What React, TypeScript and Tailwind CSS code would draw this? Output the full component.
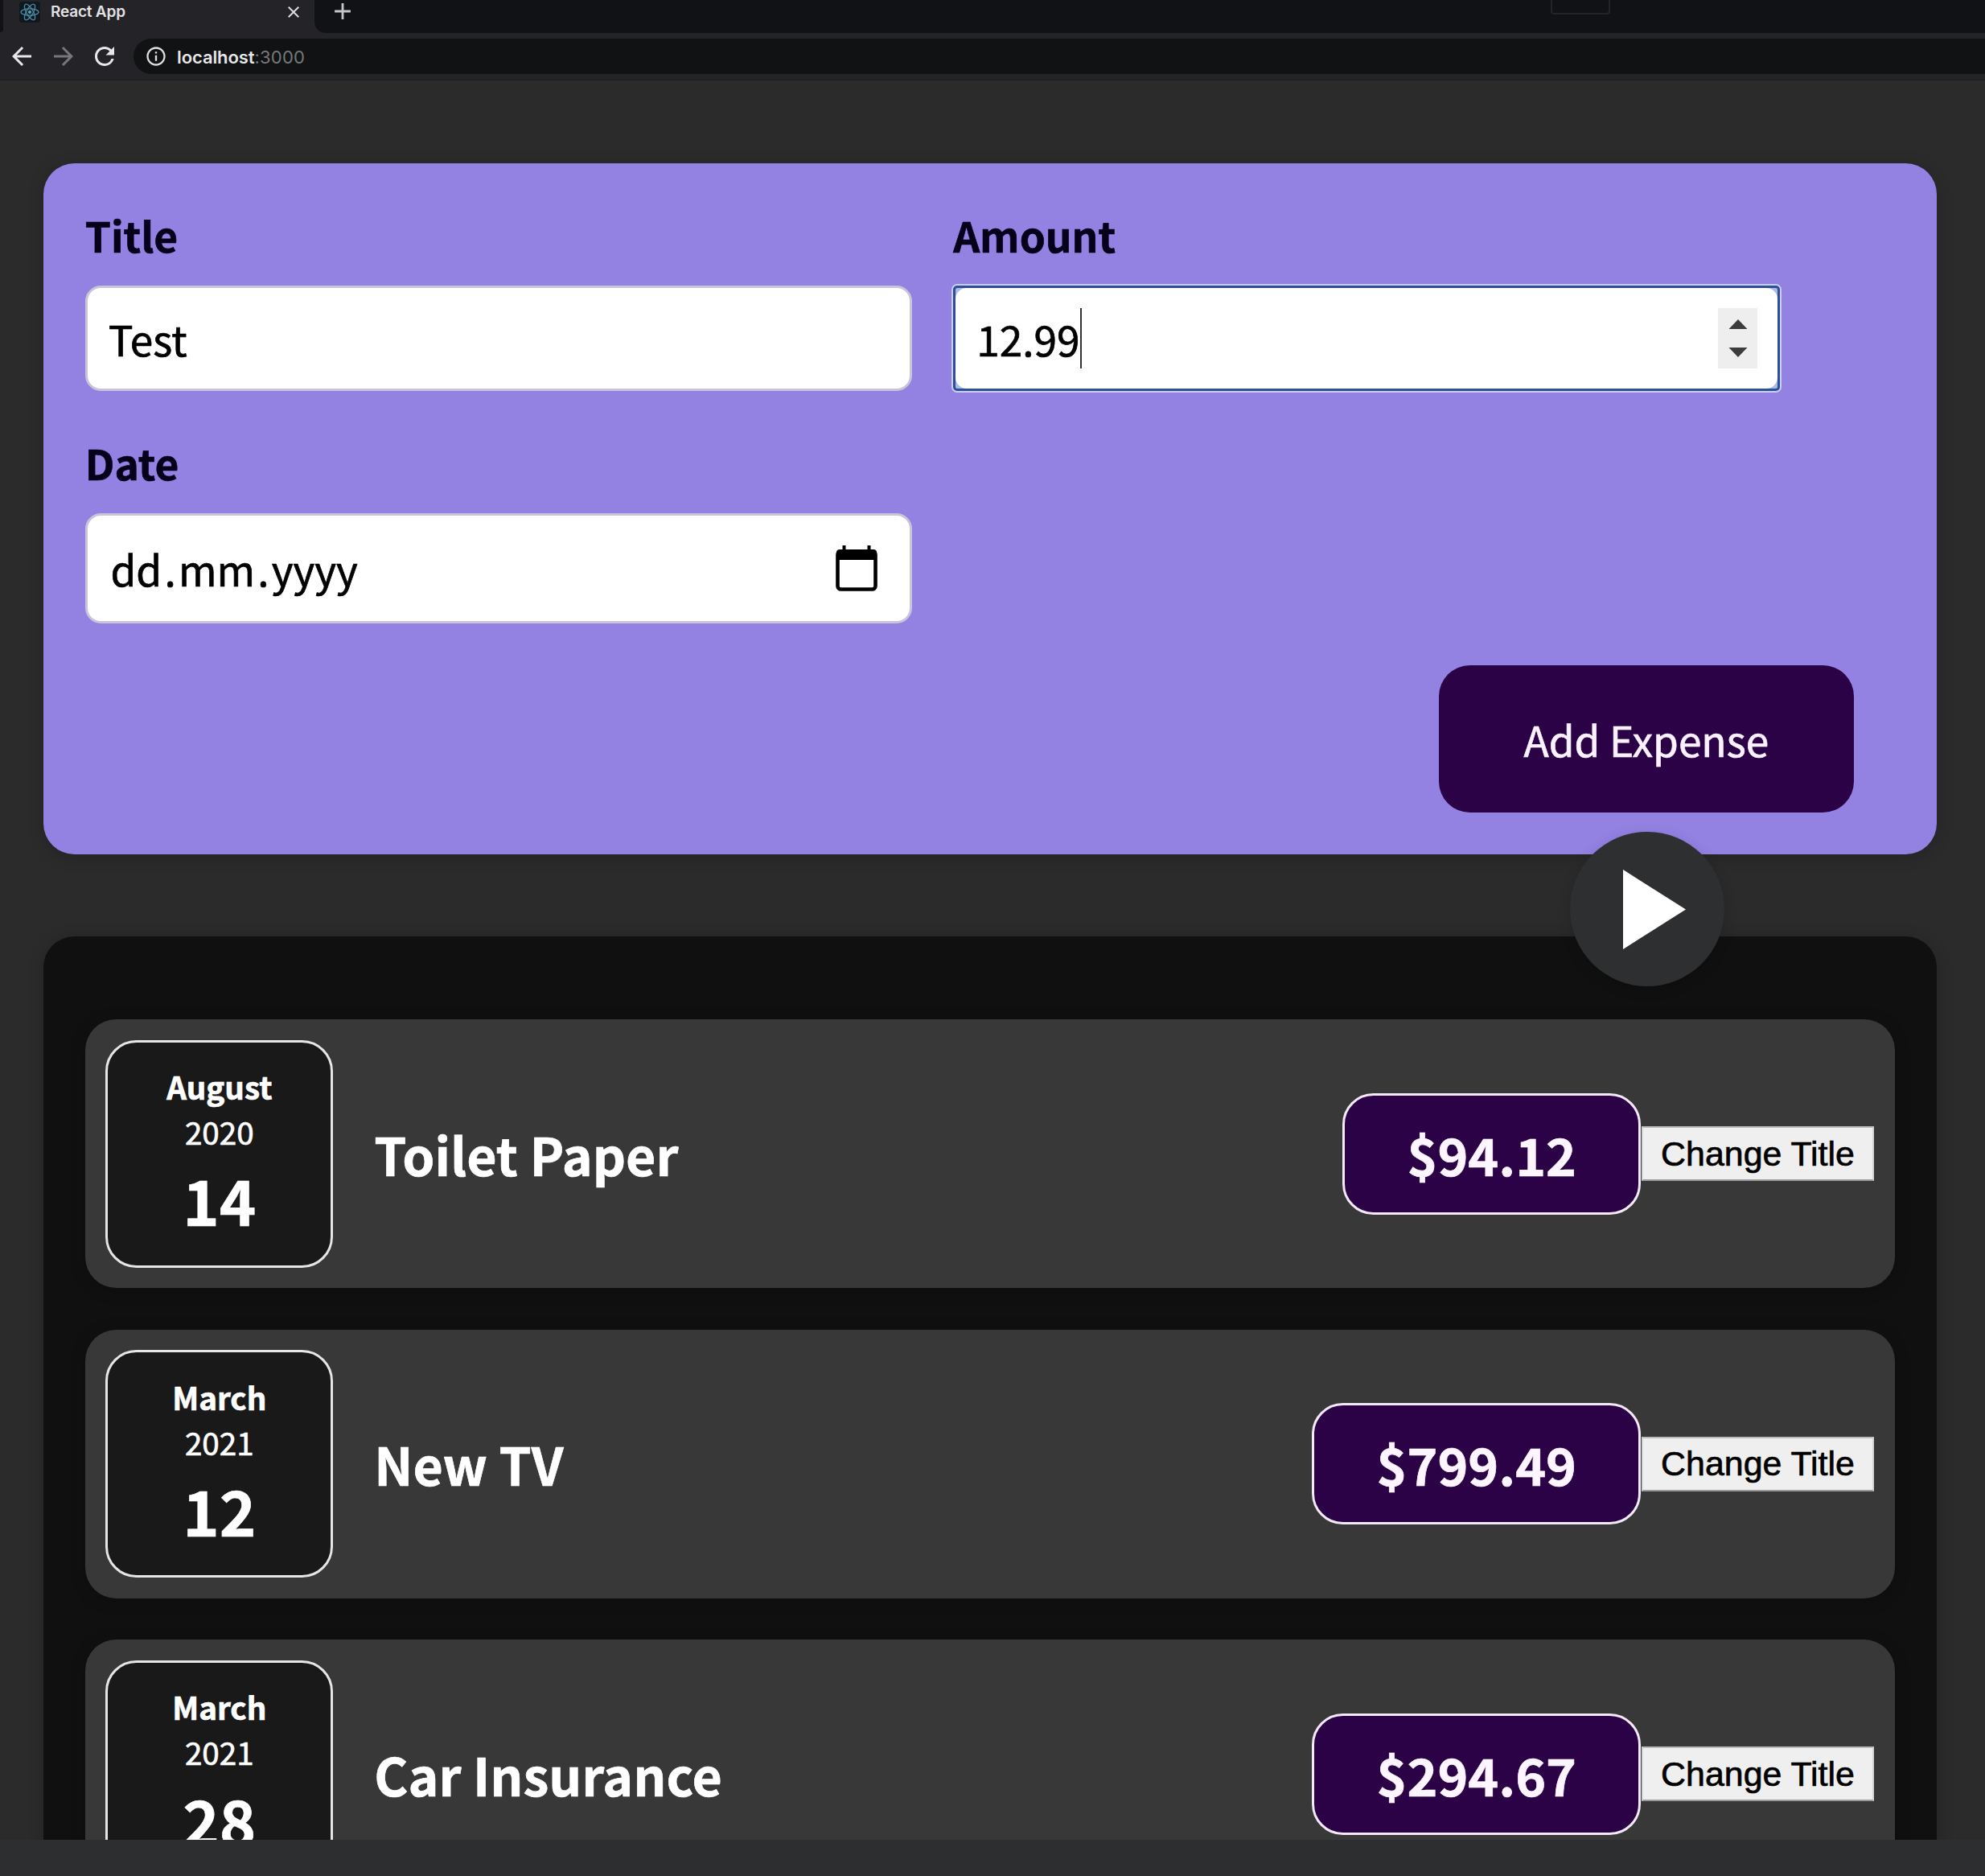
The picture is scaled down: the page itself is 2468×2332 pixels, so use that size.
import React from "react";
import { MdAdd, MdArrowBack, MdArrowForward, MdClose, MdInfoOutline, MdRefresh } from "react-icons/md";

type Expense = {
  month: string;
  year: string;
  day: string;
  title: string;
  amount: string;
};

const expenses: Expense[] = [
  { month: "August", year: "2020", day: "14", title: "Toilet Paper", amount: "$94.12" },
  { month: "March", year: "2021", day: "12", title: "New TV", amount: "$799.49" },
  { month: "March", year: "2021", day: "28", title: "Car Insurance", amount: "$294.67" },
];

function ReactLogo() {
  return (
    <span className="flex h-[26px] w-[26px] items-center justify-center rounded-[4px] bg-[#10181e]">
      <svg viewBox="-12 -12 24 24" className="h-6 w-6" fill="none" stroke="#4a8ba6" strokeWidth="1.3">
        <ellipse rx="11" ry="4.2" />
        <ellipse rx="11" ry="4.2" transform="rotate(60)" />
        <ellipse rx="11" ry="4.2" transform="rotate(120)" />
        <circle r="2" fill="#5aa5c2" stroke="none" />
      </svg>
    </span>
  );
}

function BrowserChrome() {
  return (
    <header className="h-[100px] border-b border-[#1b1b1c] bg-[#242328] font-['Inter',sans-serif]">
      <div className="flex h-[41px]">
        <div className="h-[40px] w-[4px] rounded-br-[4px] bg-[#111214]" />
        <div className="flex h-[29px] w-[387px] items-center pr-[14px] pl-5">
          <ReactLogo />
          <span className="mt-px ml-[13px] text-[19px] font-semibold tracking-[-0.2px] text-[#e2e2e4]">React App</span>
          <MdClose className="ml-auto h-6 w-6 text-[#dcdcde]" />
        </div>
        <div className="flex flex-1 justify-between rounded-bl-[14px] bg-[#111215]">
          <MdAdd className="mt-[-3px] ml-[18px] h-[34px] w-[34px] text-[#c6c6c8]" />
          <div className="mr-[466px] h-[18px] w-[74px] rounded-b-[4px] border-2 border-t-0 border-[#232426]" />
        </div>
      </div>
      <div className="flex h-[58px] items-center pl-[9px]">
        <MdArrowBack className="h-9 w-9 text-[#e8e8ea]" />
        <MdArrowForward className="ml-4 h-9 w-9 text-[#77767b]" />
        <MdRefresh className="ml-[15px] h-9 w-9 text-[#e8e8ea]" />
        <div className="ml-[18px] flex h-[44px] flex-1 items-center rounded-l-full bg-[#111214] pl-[14px]">
          <MdInfoOutline className="h-7 w-7 text-[#dedee0]" />
          <span className="mt-[2px] ml-[12px] text-[22px] text-[#77787b]">
            <span className="font-semibold tracking-[-0.1px] text-[#e6e6e8]">localhost</span>
            <span className="tracking-[0.25px]">:3000</span>
          </span>
        </div>
      </div>
    </header>
  );
}

function Field({ label, children }: { label: string; children: React.ReactNode }) {
  return (
    <div className="w-[1028px]">
      <div className="mb-[25.2px] pt-[0.5px] text-[51.4px] leading-[74.5px] font-bold text-[#06001a]">{label}</div>
      {children}
    </div>
  );
}

function CalendarIcon() {
  return (
    <svg viewBox="0 0 52 58" className="h-[58px] w-[52px]" fill="none">
      <rect x="2.5" y="7.5" width="47" height="47" rx="4" stroke="#000" strokeWidth="4.6" />
      <path d="M1 9a4 4 0 0 1 4-4h42a4 4 0 0 1 4 4v9H1z" fill="#000" />
      <path d="M10.5 0v8M41.5 0v8" stroke="#000" strokeWidth="4" />
    </svg>
  );
}

function ExpenseForm() {
  return (
    <section className="mx-[0.4px] rounded-[38.6px] bg-[#9482e3] px-[51.4px] py-[51.4px] shadow-[0_3px_20px_rgba(0,0,0,0.2)]">
      <div className="flex flex-wrap gap-x-[51.4px] gap-y-[51.4px]">
        <Field label="Title">
          <div className="h-[131.6px] rounded-[19.3px] border-[3px] border-[#c9c4d8] bg-white px-[26px] pt-[26.7px] text-[51.4px] leading-[74.5px] text-black">
            Test
          </div>
        </Field>
        <Field label="Amount">
          <div className="h-[131.6px] rounded-[5px] border-[3px] border-[#2f4f94] bg-[#a9bbe8] shadow-[0_0_0_2px_#c8cff0]">
            <div className="flex h-full items-center justify-between rounded-[14px] bg-white pr-[25px] pl-[26px]">
              <div className="flex items-center">
                <span className="pt-[2px] text-[51.4px] leading-[74.5px] text-black">12.99</span>
                <span className="h-[75px] w-[2px] bg-[#333]" />
              </div>
              <div className="flex h-[75px] w-[49px] flex-col items-center justify-center bg-[#eeeeee]">
                <svg viewBox="0 0 24 48" className="h-12 w-6" fill="#3c3c3c">
                  <path d="M12 1 23.5 13H.5zM12 48 23.5 36H.5z" />
                </svg>
              </div>
            </div>
          </div>
        </Field>
        <Field label="Date">
          <div className="flex h-[137.6px] items-center justify-between rounded-[19.3px] border-[3px] border-[#c9c4d8] bg-white pr-[40px] pl-[25.5px] text-[51.4px] leading-[74.5px] text-black">
            <div className="flex pt-[2px]">
              <span className="px-[3.2px]">dd</span>.<span className="px-[3.2px]">mm</span>.
              <span className="px-[3.2px]">yyyy</span>
            </div>
            <CalendarIcon />
          </div>
        </Field>
      </div>
      <div className="mt-[51.4px] mr-[51.4px] flex justify-end">
        <button className="h-[183.4px] w-[516px] rounded-[38.6px] bg-[#2a0245] pt-[2px] text-[51.4px] leading-[74.5px] text-[#fbf2ff]">
          Add Expense
        </button>
      </div>
    </section>
  );
}

function ExpenseDate({ month, year, day }: Pick<Expense, "month" | "year" | "day">) {
  return (
    <div className="flex h-[283px] w-[283px] shrink-0 flex-col items-center justify-center rounded-[38.6px] border-[3px] border-[#e6e6e6] bg-[#191919]">
      <div className="text-[38.6px] leading-[56px] font-bold">{month}</div>
      <div className="text-[38.6px] leading-[56px]">{year}</div>
      <div className="text-[77.2px] leading-[112px] font-bold">{day}</div>
    </div>
  );
}

function ExpenseItem({ month, year, day, title, amount }: Expense) {
  return (
    <li className="flex h-[334px] shrink-0 items-center rounded-[38.6px] bg-[#383838] py-[25.7px] pr-[26.6px] pl-[25.7px] text-white shadow-[0_3px_20px_rgba(0,0,0,0.2)]">
      <ExpenseDate month={month} year={year} day={day} />
      <h2 className="ml-[51px] flex-1 text-[64.3px] leading-[93px] font-bold">{title}</h2>
      <div className="flex h-[151px] items-center rounded-[38.6px] border-[3px] border-[#f3e9f8] bg-[#2a0245] px-[77.2px] text-[64.3px] leading-[93px] font-bold text-[#fdf5ff]">
        {amount}
      </div>
      <button className="ml-px h-[68px] w-[288.6px] border-2 border-[#d6d6d6] border-t-[#bdbdbd] border-b-[#9a9a9a] bg-[#efefef] font-['Liberation_Sans',sans-serif] text-[42.9px] leading-[49px] font-normal text-black">
        Change Title
      </button>
    </li>
  );
}

export default function App() {
  return (
    <div className="flex h-[2332px] w-[2468px] flex-col overflow-hidden bg-[#2b2b2b] font-['Noto_Sans_CJK_JP',sans-serif]">
      <BrowserChrome />
      <main className="relative h-[2187px] shrink-0 overflow-hidden px-[54px] pt-[103px] pr-[60px] [-webkit-text-stroke-width:0.7px]">
        <ExpenseForm />
        <ul className="mt-[102.5px] flex h-[1400px] flex-col gap-[51.5px] rounded-[38.6px] bg-[#101010] px-[51.6px] pt-[103px] shadow-[0_3px_20px_rgba(0,0,0,0.2)]">
          {expenses.map((expense) => (
            <ExpenseItem key={expense.title} {...expense} />
          ))}
        </ul>
        <div className="absolute top-[934px] left-[1952px] flex h-[192px] w-[192px] items-center justify-center rounded-full bg-[#2d2f31] shadow-[0_4px_16px_rgba(0,0,0,0.16)]">
          <svg viewBox="0 0 78 99" className="ml-[18px] h-[99px] w-[78px]" fill="#fff">
            <path d="M0 0 78 49.5 0 99z" />
          </svg>
        </div>
      </main>
      <footer className="h-[45px] shrink-0 bg-[#2d2e30]" />
    </div>
  );
}
